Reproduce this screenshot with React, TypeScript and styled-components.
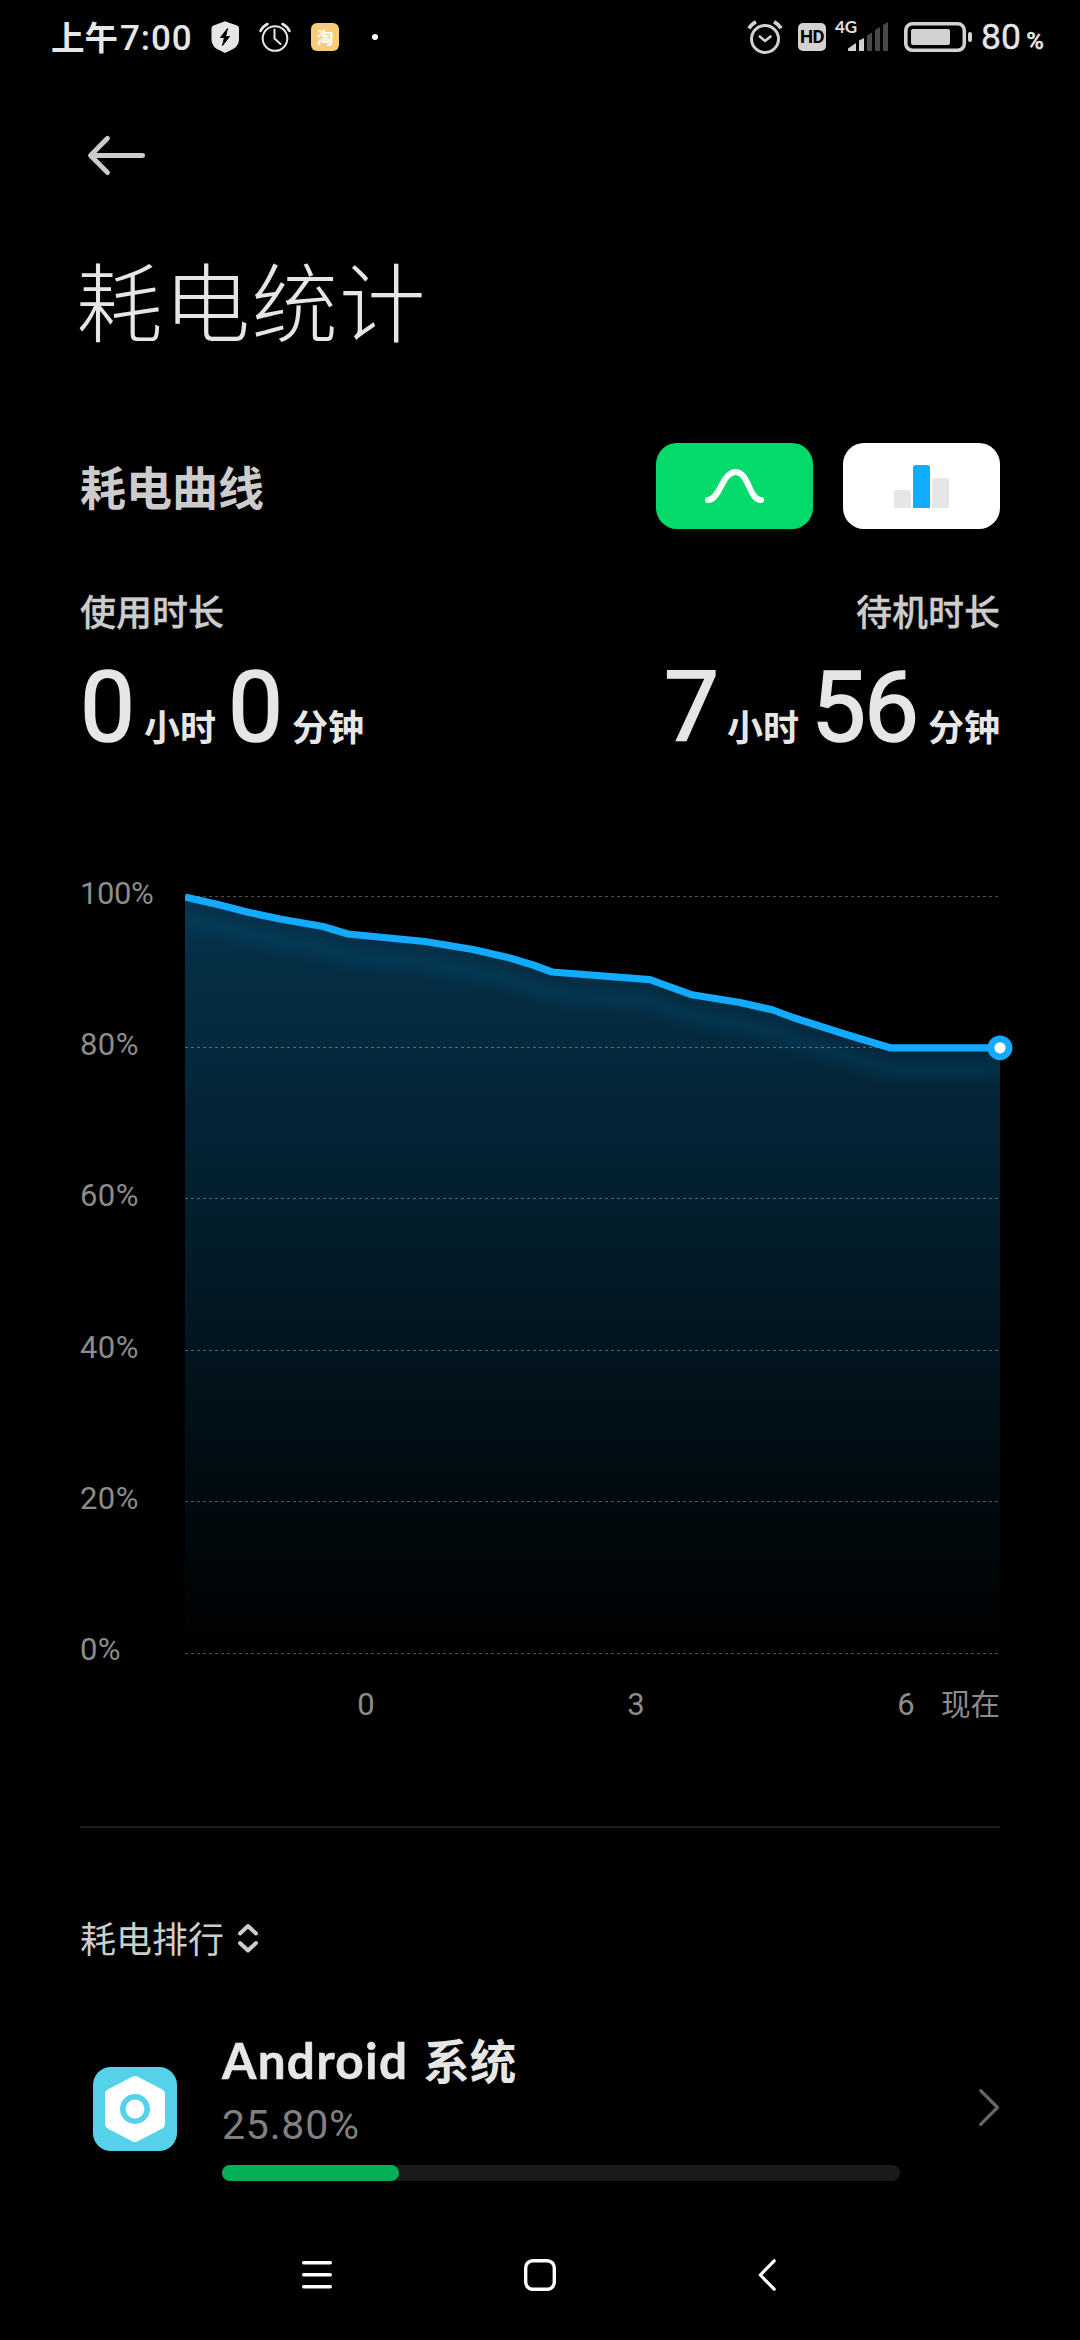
import React from "react";
import styled, { createGlobalStyle } from "styled-components";

const LATIN = `Lato, "Noto Sans CJK SC", sans-serif`;
const NUMERIC = `Roboto, "Noto Sans CJK SC", sans-serif`;
const CJK = `"Noto Sans CJK SC", sans-serif`;

const GlobalStyle = createGlobalStyle`
  * { box-sizing: border-box; }
  html, body { margin: 0; padding: 0; background: #000; }
  body { font-family: ${LATIN}; overflow: hidden; }
  svg { display: block; flex: none; overflow: visible; }
`;

const Screen = styled.div`
  width: 1080px;
  height: 2340px;
  background: #000;
  color: #e6e6e6;
  display: flex;
  flex-direction: column;
  overflow: hidden;
`;

const StatusBar = styled.header`
  height: 74px;
  padding: 0 36px 0 51px;
  display: flex;
  align-items: center;
  justify-content: space-between;
`;

const StatusGroup = styled.div`
  display: flex;
  align-items: center;
`;

const Clock = styled.div`
  width: 157px;
  display: flex;
  align-items: baseline;
  white-space: nowrap;
`;

const ClockPeriod = styled.span`
  font: 700 33.5px/40px ${CJK};
`;

const ClockTime = styled.span`
  font: 500 35px/40px ${NUMERIC};
  letter-spacing: 0.9px;
  margin-left: 2px;
`;

const TaoBadge = styled.div`
  width: 28px;
  height: 28px;
  margin-left: 20px;
  border-radius: 6px;
  background: #f9cc78;
  color: #fff;
  font: 700 17px/27px ${CJK};
  text-align: center;
`;

const MoreDot = styled.div`
  width: 6px;
  height: 6px;
  margin-left: 33px;
  border-radius: 50%;
  background: #fff;
`;

const HdBadge = styled.div`
  width: 28px;
  height: 28px;
  margin-left: 16px;
  border-radius: 5px;
  background: #d2d2d2;
  color: #000;
  font: 700 18.5px/29px Roboto, sans-serif;
  letter-spacing: -0.5px;
  text-align: center;
`;

const Signal = styled.div`
  position: relative;
  width: 54px;
  height: 30px;
  margin-left: 9px;
`;

const NetworkType = styled.span`
  position: absolute;
  left: 0;
  top: -3px;
  font: 700 17px/16px ${LATIN};
  color: #e0e0e0;
`;

const BatteryLevel = styled.div`
  margin-left: 8px;
  padding-top: 4px;
  width: 63px;
  display: flex;
  align-items: baseline;
  justify-content: space-between;
  font: 400 35.5px/44px ${NUMERIC};
  -webkit-text-stroke: 0.4px #e6e6e6;
`;

const BatteryUnit = styled.span`
  font-size: 24px;
  font-weight: 500;
`;

const Content = styled.main`
  flex: 1;
  padding: 0 80px;
  display: flex;
  flex-direction: column;
`;

const BackButton = styled.button`
  margin: 58px 0 0 7px;
  padding: 0;
  width: 60px;
  height: 46px;
  border: 0;
  background: none;
`;

const Title = styled.h1`
  margin: 56px 0 0 -4px;
  font: 300 86.5px/130px ${CJK};
  letter-spacing: 1.2px;
  color: #e6e6e6;
`;

const CurveHeader = styled.section`
  margin-top: 79px;
  height: 86px;
  display: flex;
  align-items: center;
`;

const CurveTitle = styled.h2`
  margin: 0;
  padding-bottom: 2px;
  flex: 1;
  font: 700 46px/84px ${CJK};
  color: #ccc;
`;

const ModeButton = styled.button<{ $color: string }>`
  width: 157px;
  height: 86px;
  margin-left: 30px;
  padding: 0;
  border: 0;
  border-radius: 21px;
  background: ${(p) => p.$color};
`;

const Durations = styled.section`
  margin-top: 55px;
  height: 174px;
  display: flex;
  justify-content: space-between;
`;

const Duration = styled.div<{ $end?: boolean }>`
  display: flex;
  flex-direction: column;
  align-items: ${(p) => (p.$end ? "flex-end" : "flex-start")};
`;

const DurationLabel = styled.div`
  font: 500 36px/52px ${CJK};
  color: #ccc;
  -webkit-text-stroke: 0.3px #ccc;
`;

const DurationValue = styled.div`
  display: flex;
  align-items: baseline;
  margin-top: 12px;
`;

const Digits = styled.span<{ $width: number }>`
  width: ${(p) => p.$width}px;
  display: flex;
  justify-content: center;
  font: 400 98px/120px ${NUMERIC};
  letter-spacing: -2px;
  -webkit-text-stroke: 1.6px #e6e6e6;
`;

const Unit = styled.span`
  margin: 0 12px 0 11px;
  font: 700 36px/120px ${CJK};
  &:last-child { margin-right: 0; }
`;

const Chart = styled.section`
  margin-top: 117px;
  display: grid;
  grid-template-columns: 105px 815px;
`;

const YAxis = styled.div`
  display: flex;
  flex-direction: column;
`;

const YLabel = styled.div`
  height: 151.2px;
  font: 400 31px/38px ${NUMERIC};
  letter-spacing: 0.4px;
  color: #8c8c8c;
  &:first-child { letter-spacing: -0.4px; }
  &:last-child { height: 36px; }
`;

const Plot = styled.svg`
  margin-top: 17px;
`;

const XAxis = styled.div`
  grid-column: 2;
  display: flex;
  align-items: baseline;
  margin-top: 13px;
  padding-left: 166px;
  height: 44px;
  color: #8c8c8c;
`;

const XTick = styled.span`
  width: 30px;
  margin-right: 240px;
  text-align: center;
  font: 400 31px/44px ${NUMERIC};
  &:nth-last-child(2) { margin-right: 0; }
`;

const XNow = styled.span`
  margin-left: auto;
  font: 400 29.5px/44px ${CJK};
`;

const Divider = styled.hr`
  width: 920px;
  height: 2px;
  margin: 102px 0 0;
  border: 0;
  background: #1c1c1c;
`;

const RankHeader = styled.div`
  margin-top: 82px;
  display: flex;
  align-items: center;
  gap: 12px;
  height: 56px;
  font: 400 36px/54px ${CJK};
  color: #ccc;
`;

const RankLabel = styled.span`
  padding-bottom: 2px;
`;

const AppRow = styled.article`
  margin-top: 62px;
  display: flex;
  align-items: center;
  height: 160px;
`;

const AppIcon = styled.div`
  width: 84px;
  height: 84px;
  margin: 2px 45px 0 13px;
  border-radius: 18px;
  background: #55d2ea;
`;

const AppInfo = styled.div`
  width: 678px;
  height: 160px;
  display: flex;
  flex-direction: column;
`;

const AppName = styled.div`
  display: flex;
  align-items: baseline;
  height: 62px;
  font: 700 49.5px/62px ${LATIN};
  letter-spacing: 1.3px;
  white-space: nowrap;
  -webkit-text-stroke: 0.5px #e6e6e6;
`;

const AppNameCjk = styled.span`
  font: 700 46.5px/62px ${CJK};
  letter-spacing: 0;
  margin-left: 15px;
  -webkit-text-stroke: 0;
`;

const AppPercent = styled.div`
  font: 400 41px/56px ${NUMERIC};
  letter-spacing: 0.8px;
  color: #808080;
  margin-top: 7px;
`;

const Track = styled.div`
  height: 16px;
  margin-top: 12px;
  border-radius: 8px;
  background: #1a1a1a;
`;

const Fill = styled.div`
  height: 16px;
  border-radius: 8px;
  background: #04b057;
`;

const NavBar = styled.nav`
  height: 130px;
  padding: 0 302px;
  display: flex;
  align-items: center;
  justify-content: space-between;
`;

const HomeIcon = styled.svg`
  margin-right: 10px;
`;

const points: [number, number][] = [
  [0, 5], [33, 12.5], [62, 20], [95, 27], [138, 34.5], [163, 42], [240, 49.5], [288, 57.5],
  [323, 65.5], [348, 73], [367, 80], [465, 87.7], [507, 102.8], [555, 110.5], [588, 118],
  [608, 125.5], [658, 141.5], [705, 155.8], [815, 155.8],
];

const gridLines = [4, 155, 306, 458, 609, 761];

function UsageChart() {
  const line = points.map((p) => p.join(",")).join(" ");
  return (
    <Plot width="815" height="764" viewBox="0 0 815 764">
      <defs>
        <linearGradient id="area" x1="0" y1="0" x2="0" y2="764" gradientUnits="userSpaceOnUse">
          <stop offset="0" stopColor="#12abff" stopOpacity="0.3" />
          <stop offset="1" stopColor="#12abff" stopOpacity="0" />
        </linearGradient>
        <clipPath id="under">
          <polygon points={`0,764 ${line} 815,764`} />
        </clipPath>
        <clipPath id="plot">
          <rect x="0" y="-10" width="830" height="774" />
        </clipPath>
        <filter id="soft" x="-10%" y="-30%" width="120%" height="200%">
          <feGaussianBlur stdDeviation="7" />
        </filter>
      </defs>
      <polygon points={`0,761 ${line} 815,761`} fill="url(#area)" />
      <g clipPath="url(#under)">
        <polyline points={line} transform="translate(0 22)" fill="none" stroke="#12abff" strokeOpacity="0.14" strokeWidth="9" filter="url(#soft)" />
      </g>
      {gridLines.map((y) => (
        <line key={y} x1="0" x2="815" y1={y + 0.5} y2={y + 0.5} stroke="#fff" strokeOpacity="0.32" strokeDasharray="3 3" />
      ))}
      <g clipPath="url(#plot)">
        <polyline points={line} fill="none" stroke="#12abff" strokeWidth="7.2" strokeLinejoin="round" />
      </g>
      <circle cx="815" cy="155.8" r="12.4" fill="#12abff" />
      <circle cx="815" cy="155.8" r="5.6" fill="#fff" />
    </Plot>
  );
}

export default function App() {
  return (
    <Screen>
      <GlobalStyle />
      <StatusBar>
        <StatusGroup>
          <Clock>
            <ClockPeriod>上午</ClockPeriod>
            <ClockTime>7:00</ClockTime>
          </Clock>
          <svg width="34" height="32" viewBox="208 21 34 32">
            <path d="M225 21.2 237 25.6Q239 26.3 239 28.5V39Q239 45 234 48.5L225 53 216 48.5Q211.500 45 211.500 39V28.500Q211.500 26.300 213.500 25.600Z" fill="#e6e6e6" />
            <path d="M227.500 28.500 220.500 37.500H224.500L222.500 45.500 229.500 36.500H225.500Z" fill="#000" stroke="#000" strokeLinejoin="round" />
          </svg>
          <svg width="32" height="32" viewBox="259 21 32 32" style={{ marginLeft: 17 }} fill="none" stroke="#e6e6e6" strokeLinecap="round">
            <circle cx="275" cy="38.500" r="12.300" strokeWidth="2" />
            <path d="M274.500 29.500V38.500L280.500 44" strokeWidth="2" />
            <path d="M260.500 31Q262.500 26.500 267.500 24M289.500 31Q287.500 26.500 282.500 24" strokeWidth="2.600" />
          </svg>
          <TaoBadge>淘</TaoBadge>
          <MoreDot />
        </StatusGroup>
        <StatusGroup>
          <svg width="35" height="34" viewBox="747 20 35 34" fill="none" stroke="#d2d2d2" strokeLinecap="round">
            <circle cx="765" cy="39" r="13.500" strokeWidth="3" />
            <path d="M759.800 36.500 765 41 770.500 36.500" strokeWidth="2.600" strokeLinejoin="round" />
            <path d="M749 28.300Q751 24.500 756 21.800M781 28.300Q779 24.500 774 21.800" strokeWidth="3.600" strokeLinecap="butt" />
          </svg>
          <HdBadge>HD</HdBadge>
          <Signal>
            <NetworkType>4G</NetworkType>
            <svg width="54" height="30" viewBox="835 22 54 30">
              <path d="M848 51V48.500L856 43V51ZM859 51V40.500L864 38V51Z" fill="#d2d2d2" />
              <path d="M867 51V35.500L872 32.500V51ZM875 51V30L880 27V51ZM883 51V25L888 22V51Z" fill="#484848" />
            </svg>
          </Signal>
          <svg width="69" height="30" viewBox="904 22 69 30" style={{ marginLeft: 15 }}>
            <rect x="905.800" y="23.800" width="58.500" height="26.500" rx="6.500" fill="none" stroke="#d2d2d2" strokeWidth="3.600" />
            <rect x="911" y="29" width="39" height="16" rx="2" fill="#d2d2d2" />
            <rect x="968" y="32" width="4" height="10" rx="2" fill="#d2d2d2" />
          </svg>
          <BatteryLevel>
            80<BatteryUnit>%</BatteryUnit>
          </BatteryLevel>
        </StatusGroup>
      </StatusBar>

      <Content>
        <BackButton aria-label="back">
          <svg width="60" height="46" viewBox="87 132 60 46" fill="none" stroke="#ccc" strokeWidth="4.800" strokeLinecap="round" strokeLinejoin="round">
            <path d="M107.500 138.300 90.500 155.500 107.500 172.500M91 155.500H142.700" />
          </svg>
        </BackButton>
        <Title>耗电统计</Title>

        <CurveHeader>
          <CurveTitle>耗电曲线</CurveTitle>
          <ModeButton $color="#03da6a" aria-label="curve">
            <svg width="157" height="86" viewBox="656 443 157 86">
              <path d="M708 500C720 500 722 472 735.500 472C749 472 749 500 761 500" fill="none" stroke="#fff" strokeWidth="6" strokeLinecap="round" />
            </svg>
          </ModeButton>
          <ModeButton $color="#fff" aria-label="bars">
            <svg width="157" height="86" viewBox="843 443 157 86">
              <path d="M894 508V492.500Q894 490 896.500 490H908.500Q911 490 911 492.500V508ZM932 508V480.500Q932 478 934.500 478H946.500Q949 478 949 480.500V508Z" fill="#e6e6e6" />
              <path d="M913 508V467.500Q913 465 915.500 465H927.500Q930 465 930 467.500V508Z" fill="#12abff" />
            </svg>
          </ModeButton>
        </CurveHeader>

        <Durations>
          <Duration>
            <DurationLabel>使用时长</DurationLabel>
            <DurationValue>
              <Digits $width={53}>0</Digits>
              <Unit>小时</Unit>
              <Digits $width={53}>0</Digits>
              <Unit>分钟</Unit>
            </DurationValue>
          </Duration>
          <Duration $end>
            <DurationLabel>待机时长</DurationLabel>
            <DurationValue>
              <Digits $width={51}>7</Digits>
              <Unit>小时</Unit>
              <Digits $width={106}>56</Digits>
              <Unit>分钟</Unit>
            </DurationValue>
          </Duration>
        </Durations>

        <Chart>
          <YAxis>
            {["100%", "80%", "60%", "40%", "20%", "0%"].map((t) => (
              <YLabel key={t}>{t}</YLabel>
            ))}
          </YAxis>
          <UsageChart />
          <XAxis>
            <XTick>0</XTick>
            <XTick>3</XTick>
            <XTick>6</XTick>
            <XNow>现在</XNow>
          </XAxis>
        </Chart>

        <Divider />

        <RankHeader>
          <RankLabel>耗电排行</RankLabel>
          <svg width="24" height="32" viewBox="236 1922 24 32" fill="none" stroke="#ccc" strokeWidth="4" strokeLinecap="round" strokeLinejoin="round">
            <path d="M240 1933.500 248 1926 256 1933.500M240 1943 248 1950.500 256 1943" />
          </svg>
        </RankHeader>

        <AppRow>
          <AppIcon>
            <svg width="84" height="84" viewBox="93 2067 84 84">
              <path d="M135 2081 160 2094V2124L135 2137 110 2124V2094Z" fill="#fff" stroke="#fff" strokeWidth="10" strokeLinejoin="round" />
              <circle cx="135" cy="2109" r="12.200" fill="#fff" stroke="#55d2ea" strokeWidth="5.600" />
            </svg>
          </AppIcon>
          <AppInfo>
            <AppName>
              Android<AppNameCjk>系统</AppNameCjk>
            </AppName>
            <AppPercent>25.80%</AppPercent>
            <Track>
              <Fill style={{ width: `${(177 / 678) * 100}%` }} />
            </Track>
          </AppInfo>
          <svg width="22" height="38" viewBox="979 2090 22 38" style={{ marginLeft: "auto" }} fill="none" stroke="#666" strokeWidth="3.200" strokeLinecap="round" strokeLinejoin="round">
            <path d="M981.700 2091.700 998.500 2108.500 981.700 2125.300" />
          </svg>
        </AppRow>
      </Content>

      <NavBar>
        <svg width="30" height="32" viewBox="302 2259 30 32" stroke="#fff" strokeWidth="3.400" strokeLinecap="round">
          <path d="M303.700 2262.800H330.300M303.700 2274.800H330.300M303.700 2286.800H330.300" />
        </svg>
        <HomeIcon width="32" height="32" viewBox="524 2259 32 32">
          <rect x="525.700" y="2260.700" width="28.600" height="28.600" rx="7" fill="none" stroke="#fff" strokeWidth="3.400" />
        </HomeIcon>
        <svg width="20" height="32" viewBox="758 2259 20 32" fill="none" stroke="#fff" strokeWidth="3.200" strokeLinecap="round" strokeLinejoin="round">
          <path d="M774.200 2260.800 760.300 2275 774.200 2289.200" />
        </svg>
      </NavBar>
    </Screen>
  );
}
